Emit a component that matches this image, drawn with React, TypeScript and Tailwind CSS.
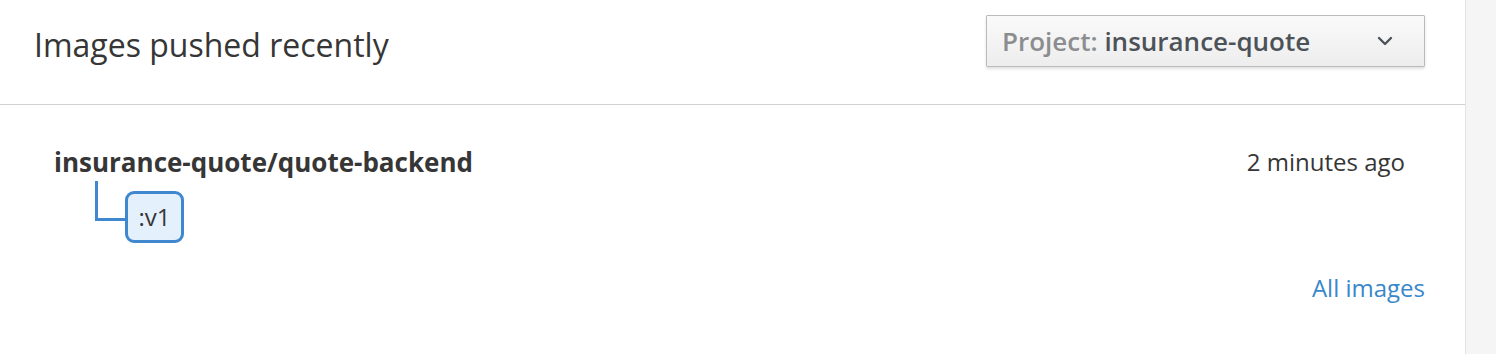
import React from 'react';

const font = { fontFamily: '"Open Sans", "Liberation Sans", sans-serif' };

const ChevronDown = () => (
    <svg width="16" height="10" viewBox="0 0 16 10" fill="none">
        <path d="M2 2l6 6 6-6" stroke="#4d5258" strokeWidth="2.4" strokeLinecap="round" strokeLinejoin="round" />
    </svg>
);

export default function App() {
    return (
        <div className="flex w-[1496px] h-[354px] bg-[#f5f5f5] text-[#363636]" style={font}>
            <div className="w-[1466px] h-full bg-white border-r border-[#e3e3e3]">

                {/* Header */}
                <div className="flex justify-between items-start h-[105px] pl-[34px] pr-[40px] pt-[15px] border-b border-[#d1d1d1]">
                    <h2 className="mt-[10px] text-[32px] leading-[40px] font-normal">Images pushed recently</h2>
                    <button className="flex items-center justify-between w-[439px] h-[52px] pl-[15px] pr-[31px] border border-[#bbbbbb] rounded-[1px] bg-gradient-to-b from-[#fafafa] to-[#ededed] shadow-[0_2px_3px_rgba(0,0,0,0.12)] text-[26px] font-semibold">
                        <span>
                            <span className="text-[#8b8d8f]">Project: </span>
                            <span className="text-[#4d5258]">insurance-quote</span>
                        </span>
                        <ChevronDown />
                    </button>
                </div>

                {/* Recent image */}
                <div className="pl-[54px] pr-[60px] pt-[40px]">
                    <div className="flex justify-between items-start">
                        <div className="text-[26px] leading-[34px] font-bold">insurance-quote/quote-backend</div>
                        <div className="text-[24px] leading-[34px]">2 minutes ago</div>
                    </div>
                    <div className="flex items-start pl-[41px]">
                        <div className="w-[30px] h-[40px] mt-[2px] border-l-[3px] border-b-[3px] border-[#3f88d0]" />
                        <div className="mt-[12px] w-[59px] h-[52px] flex items-center justify-center border-[3px] border-[#3f88d0] rounded-[9px] bg-[#e4f1fc] text-[24px]">
                            :v1
                        </div>
                    </div>
                </div>

                <div className="flex justify-end pr-[40px] mt-[28px]">
                    <a href="#" className="text-[24px] leading-[34px] text-[#3a87c9]">All images</a>
                </div>
            </div>
        </div>
    );
}
